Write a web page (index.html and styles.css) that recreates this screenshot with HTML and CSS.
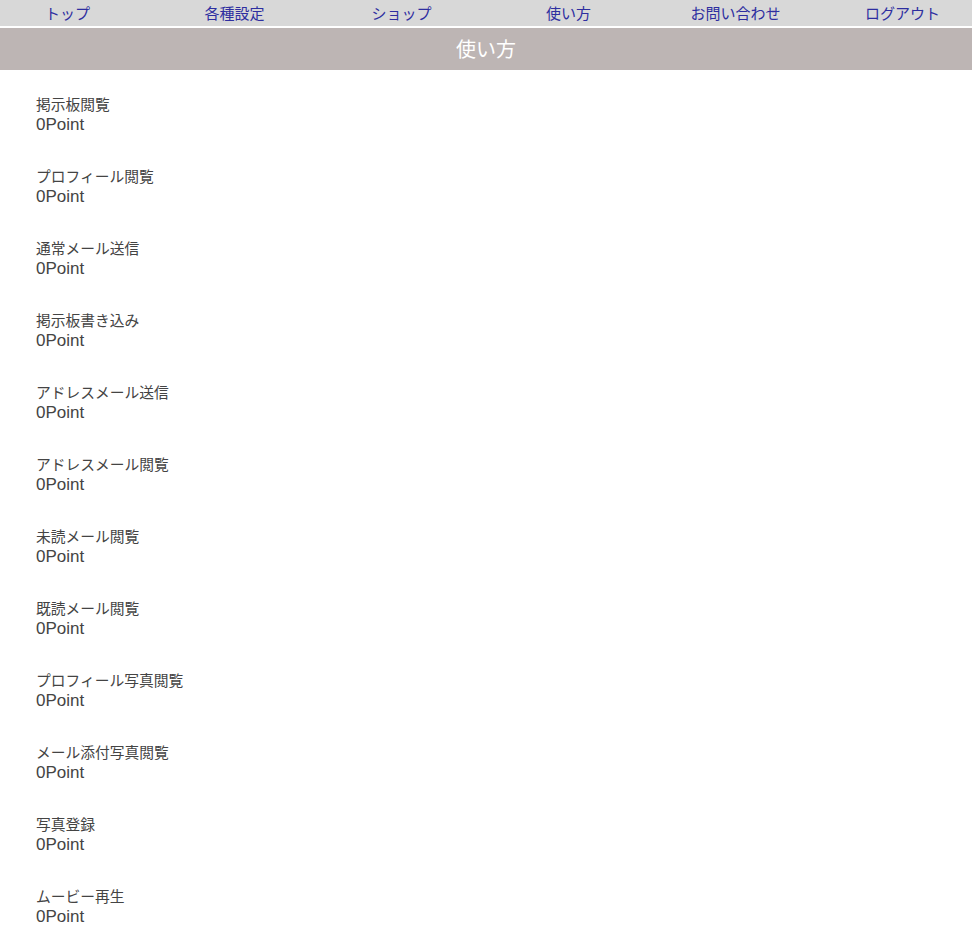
FILE: index.html
```html
<!DOCTYPE html>
<html lang="ja">
  <head>
    <meta charset="UTF-8" />
    <meta name="viewport" content="width=device-width, initial-scale=1.0" />
    <title>使い方</title>
    <link rel="stylesheet" href="styles.css">
  </head>
  <body>
    <nav class="global-nav">
      <ul class="nav-list">
        <li><a href="#">トップ</a></li>
        <li><a href="#">各種設定</a></li>
        <li><a href="#">ショップ</a></li>
        <li><a href="#">使い方</a></li>
        <li><a href="#">お問い合わせ</a></li>
        <li><a href="#">ログアウト</a></li>
      </ul>
    </nav>

    <h1 class="page-title">使い方</h1>

    <div class="point-list">
      <div class="point-item">
        <div class="point-label">掲示板閲覧</div>
        <div class="point-value">0Point</div>
      </div>
      <div class="point-item">
        <div class="point-label">プロフィール閲覧</div>
        <div class="point-value">0Point</div>
      </div>
      <div class="point-item">
        <div class="point-label">通常メール送信</div>
        <div class="point-value">0Point</div>
      </div>
      <div class="point-item">
        <div class="point-label">掲示板書き込み</div>
        <div class="point-value">0Point</div>
      </div>
      <div class="point-item">
        <div class="point-label">アドレスメール送信</div>
        <div class="point-value">0Point</div>
      </div>
      <div class="point-item">
        <div class="point-label">アドレスメール閲覧</div>
        <div class="point-value">0Point</div>
      </div>
      <div class="point-item">
        <div class="point-label">未読メール閲覧</div>
        <div class="point-value">0Point</div>
      </div>
      <div class="point-item">
        <div class="point-label">既読メール閲覧</div>
        <div class="point-value">0Point</div>
      </div>
      <div class="point-item">
        <div class="point-label">プロフィール写真閲覧</div>
        <div class="point-value">0Point</div>
      </div>
      <div class="point-item">
        <div class="point-label">メール添付写真閲覧</div>
        <div class="point-value">0Point</div>
      </div>
      <div class="point-item">
        <div class="point-label">写真登録</div>
        <div class="point-value">0Point</div>
      </div>
      <div class="point-item">
        <div class="point-label">ムービー再生</div>
        <div class="point-value">0Point</div>
      </div>
    </div>
  </body>
</html>
```

FILE: styles.css
```css
* {
  margin: 0;
  padding: 0;
  box-sizing: border-box;
}

body {
  font-family: "Noto Sans CJK JP", "Noto Sans", sans-serif;
  background: #fff;
  color: #444;
  overflow: hidden;
}

.global-nav {
  background: #d8d8d8;
  height: 26px;
  overflow: hidden;
}

.nav-list {
  list-style: none;
  display: grid;
  grid-template-columns: repeat(6, 167px);
  margin-left: -16px;
}

.nav-list li {
  text-align: center;
  line-height: 26px;
  font-size: 15px;
}

.nav-list a {
  color: #2e2ea0;
  text-decoration: none;
}

.page-title {
  margin-top: 2px;
  height: 42px;
  line-height: 42px;
  background: #bdb5b4;
  color: #fff;
  font-size: 20px;
  font-weight: normal;
  text-align: center;
}

.point-list {
  padding: 24px 36px 0;
}

.point-item {
  margin-bottom: 29px;
}

.point-label {
  font-size: 14.75px;
  line-height: 19px;
}

.point-value {
  font-family: "Liberation Sans", "Noto Sans", sans-serif;
  font-size: 17px;
  line-height: 24px;
}
```
